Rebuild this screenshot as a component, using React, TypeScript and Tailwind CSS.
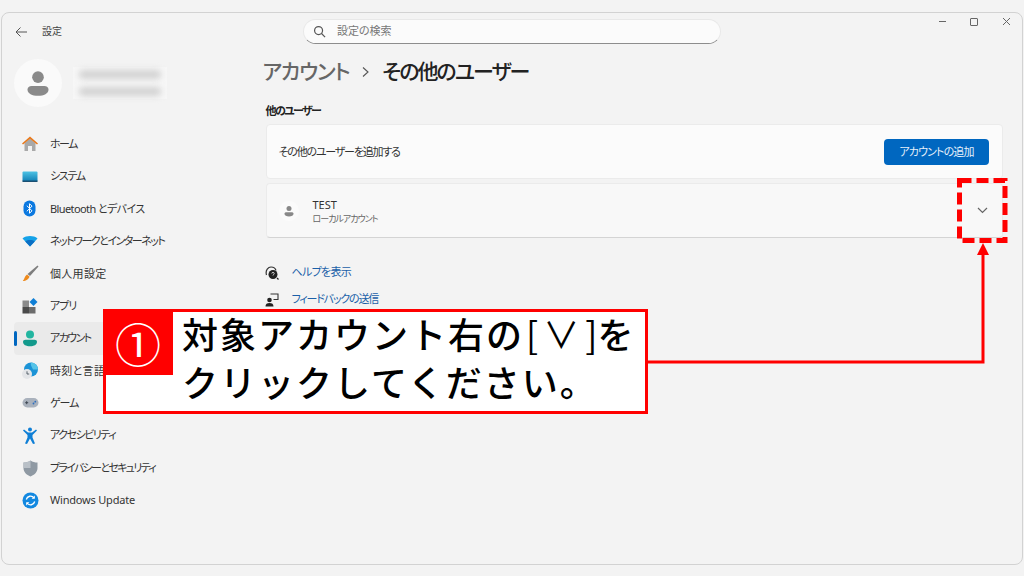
import type { ReactNode } from "react";

const ui = "font-['Noto_Sans','Noto_Sans_CJK_JP',sans-serif] [font-feature-settings:'palt']";

function UserGlyph({ size, color }: { size: number; color: string }) {
  return (
    <svg width={size} height={size} viewBox="0 0 24 24" fill={color}>
      <circle cx="12" cy="7" r="5" />
      <path d="M3 17.5C3 15.5 4.5 14.5 6.5 14.5H17.5C19.5 14.5 21 15.5 21 17.5C21 21 17 23 12 23C7 23 3 21 3 17.5Z" />
    </svg>
  );
}

const icons: Record<string, ReactNode> = {
  home: (
    <svg width="18" height="18" viewBox="0 0 18 18">
      <path d="M3.5 8L9 3.5L14.500 8V16H11V11H7V16H3.500Z" fill="#a9a9a9" />
      <path d="M1 8.500L9 1.500L17 8.500L16 9.500L9 3.800L2 9.500Z" fill="#e8781a" />
    </svg>
  ),
  system: (
    <svg width="16" height="12" viewBox="0 0 16 12">
      <defs>
        <linearGradient id="sys" x1="0" y1="0" x2="0" y2="1">
          <stop offset="0" stopColor="#4cc2e4" />
          <stop offset="1" stopColor="#0f7fb5" />
        </linearGradient>
      </defs>
      <rect x="0.500" y="0.500" width="15" height="10" rx="1" fill="url(#sys)" />
      <rect x="0.500" y="9.500" width="15" height="1.500" fill="#1b4f72" />
    </svg>
  ),
  bluetooth: (
    <svg width="14" height="18" viewBox="0 0 14 18">
      <rect x="0.500" y="0.500" width="12" height="16" rx="6" fill="#0a78e0" />
      <path d="M3.800 5.700L9 10.800L6.500 13.300V3.700L9 6.200L3.800 11.300" fill="none" stroke="#fff" strokeWidth="1" />
    </svg>
  ),
  network: (
    <svg width="16" height="12" viewBox="0 0 16 12">
      <path d="M0.500 3.500C4.500 0.300 11.500 0.300 15.500 3.500L8 11.500Z" fill="#15a2e8" />
      <path d="M3.200 6.400C6 4.500 10 4.500 12.800 6.400L8 11.500Z" fill="#0a6fc4" />
    </svg>
  ),
  personal: (
    <svg width="17" height="17" viewBox="0 0 17 17">
      <path d="M15.500 0.500L16.500 1.500L8 11L5.500 9Z" fill="#7d7d7d" />
      <path d="M5 9.500L7.500 11.500C7 14 4 16 0.800 16C2.500 14.500 2.500 11 5 9.500Z" fill="#ee8a1c" />
    </svg>
  ),
  apps: (
    <svg width="16" height="16" viewBox="0 0 16 16">
      <rect x="0.500" y="2.500" width="6.500" height="6.500" fill="#8a8a8a" />
      <rect x="0.500" y="9" width="6.500" height="6.500" fill="#4a4a4a" />
      <rect x="7" y="9" width="6.500" height="6.500" fill="#6c6c6c" />
      <path d="M11.500 0L15.500 4L11.500 8L7.500 4Z" fill="#0f7fd6" />
    </svg>
  ),
  account: (
    <svg width="16" height="17" viewBox="0 0 16 17">
      <circle cx="8" cy="4.500" r="4" fill="#22b5a0" />
      <path d="M1 11.800C1 10.500 2 9.800 3.500 9.800H12.500C14 9.800 15 10.500 15 11.800C15 14.800 12 16.300 8 16.300C4 16.300 1 14.800 1 11.800Z" fill="#139a8c" />
    </svg>
  ),
  time: (
    <svg width="18" height="18" viewBox="0 0 18 18">
      <circle cx="10" cy="7.500" r="7" fill="#1b93d6" />
      <path d="M10 0.500A7 7 0 0 1 17 7.500H12C11 5 9 3 10 0.500Z" fill="#56c4e8" />
      <circle cx="6" cy="12" r="5" fill="#e3e5e8" />
      <path d="M6 9.300V12H8.200" fill="none" stroke="#4a5560" strokeWidth="0.900" />
    </svg>
  ),
  game: (
    <svg width="17" height="12" viewBox="0 0 17 12">
      <rect x="0.500" y="1" width="16" height="9.500" rx="4.700" fill="#a9b1bc" />
      <path d="M3.200 5.700H6.200M4.700 4.200V7.200" stroke="#3d4650" strokeWidth="1" />
      <circle cx="11.500" cy="6.500" r="0.900" fill="#2c6fc0" />
      <circle cx="13.300" cy="4.700" r="0.900" fill="#2c6fc0" />
    </svg>
  ),
  access: (
    <svg width="16" height="18" viewBox="0 0 16 18">
      <circle cx="8" cy="2.500" r="2" fill="#0f7fd6" />
      <path d="M1 3.500L2 2.500L6 5.500H10L14 2.500L15 3.500L10.500 8V10.500L13 16.500L11 17L8 11.500L5 17L3 16.500L5.500 10.500V8Z" fill="#0f7fd6" />
    </svg>
  ),
  privacy: (
    <svg width="15" height="17" viewBox="0 0 15 17">
      <path d="M7.500 0.500C9.500 2 12 2.500 14.500 2.500V8C14.500 12 11.500 15 7.500 16.500C3.500 15 0.500 12 0.500 8V2.500C3 2.500 5.500 2 7.500 0.500Z" fill="#8f99a3" />
      <path d="M7.500 0.500C5.500 2 3 2.500 0.500 2.500V8H7.500Z" fill="#b9c0c7" />
    </svg>
  ),
  update: (
    <svg width="17" height="17" viewBox="0 0 17 17">
      <circle cx="8.500" cy="8.500" r="8" fill="#1288e0" />
      <path d="M4.300 7.500A4.300 4.300 0 0 1 12 6" fill="none" stroke="#fff" strokeWidth="1.300" />
      <path d="M12.700 9.500A4.300 4.300 0 0 1 5 11" fill="none" stroke="#fff" strokeWidth="1.300" />
      <path d="M12.800 3.600V6.800H9.600Z" fill="#fff" />
      <path d="M4.200 13.400V10.200H7.400Z" fill="#fff" />
    </svg>
  ),
};

const navItems = [
  { key: "home", label: "ホーム", track: "tracking-[-1.5px]" },
  { key: "system", label: "システム", track: "tracking-[-1.3px]" },
  { key: "bluetooth", label: "Bluetooth とデバイス", track: "tracking-[-0.6px]" },
  { key: "network", label: "ネットワークとインターネット", track: "tracking-[-1.5px]" },
  { key: "personal", label: "個人用設定", track: "tracking-[0.3px]" },
  { key: "apps", label: "アプリ", track: "tracking-[-1px]" },
  { key: "account", label: "アカウント", track: "tracking-[-1.6px]", active: true },
  { key: "time", label: "時刻と言語", track: "tracking-[0.3px]" },
  { key: "game", label: "ゲーム", track: "tracking-[-1px]" },
  { key: "access", label: "アクセシビリティ", track: "tracking-[-1.5px]" },
  { key: "privacy", label: "プライバシーとセキュリティ", track: "tracking-[-1.7px]" },
  { key: "update", label: "Windows Update", track: "tracking-[-0.2px]" },
];

function Header() {
  return (
    <div className="grid h-[37px] grid-cols-[1fr_418px_1fr] items-center">
      <div className="flex items-center pl-[12px]">
        <svg width="14" height="14" viewBox="0 0 14 14" fill="none" stroke="#555" strokeWidth="1">
          <path d="M13 7H2M6.500 2.500L2 7L6.500 11.500" />
        </svg>
        <span className="ml-[14px] text-[10px] text-[#444]">設定</span>
      </div>
      <div className="flex h-[25px] items-center rounded-full border border-[#e8e8e8] border-b-[#8d8d8d] bg-[#fbfbfb] pl-[9px]">
        <svg width="13" height="13" viewBox="0 0 14 14" fill="none" stroke="#555" strokeWidth="1.300">
          <circle cx="6" cy="6" r="4.300" />
          <path d="M9.200 9.200L13 13" />
        </svg>
        <span className="ml-[11px] text-[11px] text-[#777]">設定の検索</span>
      </div>
      <div className="flex items-center justify-end gap-[24px] self-start pr-[11px] pt-[4px]">
        <div className="h-[1.500px] w-[7px] bg-[#666]" />
        <div className="h-[8px] w-[8px] rounded-[1px] border-[1.500px] border-[#666]" />
        <svg width="9" height="9" viewBox="0 0 9 9" stroke="#666" strokeWidth="1">
          <path d="M1 1L8 8M8 1L1 8" />
        </svg>
      </div>
    </div>
  );
}

function Sidebar() {
  return (
    <aside className="w-[263.500px] shrink-0 pl-[12px] pr-[14px]">
      <div className="mt-[9px] flex items-center">
        <div className="flex h-[48px] w-[48px] items-center justify-center rounded-full bg-[#fafafa]">
          <UserGlyph size={28} color="#8a8a8a" />
        </div>
        <div className="ml-[11px] flex flex-col gap-[2px] bg-[#f7f7f7]">
          <div className="flex h-[15px] w-[94px] items-center justify-center">
            <div className="h-[9px] w-[82px] rounded-sm bg-[#d2d2d2] blur-[3px]" />
          </div>
          <div className="flex h-[15px] w-[94px] items-center justify-center">
            <div className="h-[9px] w-[82px] rounded-sm bg-[#d2d2d2] blur-[3px]" />
          </div>
        </div>
      </div>
      <nav className="mt-[21px]">
        {navItems.map((item) => (
          <div
            key={item.key}
            className={`relative flex h-[32.400px] items-center rounded-[4px] ${item.active ? "bg-[#eaeaea]" : ""}`}
          >
            {item.active && <div className="absolute left-0 h-[15px] w-[2.500px] rounded-full bg-[#0067c0]" />}
            <div className="flex w-[36px] shrink-0 justify-center pr-[4px]">{icons[item.key]}</div>
            <span className={`text-[11px] text-[#333] ${item.track}`}>{item.label}</span>
          </div>
        ))}
      </nav>
    </aside>
  );
}

function Main() {
  return (
    <main className="flex-1 pr-[19px]">
      <div className="mt-[6px] flex h-[32px] items-center text-[21px]">
        <span className="ml-[-3px] font-medium tracking-[-1.2px] text-[#666]">アカウント</span>
        <svg className="mx-[12px]" width="9" height="12" viewBox="0 0 9 12" fill="none" stroke="#555" strokeWidth="1.100">
          <path d="M2 1.500L7 6L2 10.500" />
        </svg>
        <span className="font-medium tracking-[-2px] text-[#222]">その他のユーザー</span>
      </div>
      <div className="mt-[15px] text-[11px] font-bold leading-[16px] tracking-[-1.6px] text-[#222]">他のユーザー</div>
      <div className="mt-[5px] flex h-[55px] items-center justify-between rounded-[4px] border border-[#ebebeb] bg-[#fbfbfb] pl-[12px] pr-[13px]">
        <span className="pt-[2px] text-[11px] tracking-[-1.2px] text-[#333]">その他のユーザーを追加する</span>
        <button className="h-[26px] w-[105px] rounded-[4px] bg-[#0067c0] pt-[2px] text-[11px] tracking-[-0.9px] text-[#e6f0fa]">アカウントの追加</button>
      </div>
      <div className="mt-[4px] flex h-[55px] items-center justify-between rounded-[4px] border border-[#ebebeb] border-b-[#d4d4d4] bg-[#f8f8f8] pl-[12px] pr-[14px]">
        <div className="flex items-center">
          <div className="flex h-[20px] w-[20px] items-center justify-center rounded-full bg-[#fbfbfb]">
            <UserGlyph size={12} color="#888" />
          </div>
          <div className="ml-[14px] flex flex-col pt-[1px]">
            <span className="text-[11px] leading-[14px] text-[#333]">TEST</span>
            <span className="text-[9px] leading-[13px] tracking-[-1px] text-[#666]">ローカルアカウント</span>
          </div>
        </div>
        <svg width="11" height="7" viewBox="0 0 11 7" fill="none" stroke="#666" strokeWidth="1.200">
          <path d="M1 1L5.500 5.500L10 1" />
        </svg>
      </div>
      <div className="ml-[-1px] mt-[21px] flex flex-col">
        <div className="flex h-[27px] items-center">
          <svg width="14" height="14" viewBox="0 0 14 14" className="shrink-0">
            <path d="M1.500 9C0 4 3.500 1 6 1C8.500 1 10.500 2.500 11 4.500" fill="none" stroke="#333" strokeWidth="1.200" />
            <circle cx="8" cy="8.500" r="4.500" fill="#222" />
            <path d="M6.800 7.500C6.800 6 9.200 6 9.200 7.500C9.200 8.500 8 8.500 8 9.500" fill="none" stroke="#fff" strokeWidth="0.800" />
            <path d="M12 12L13.500 13.500" stroke="#222" strokeWidth="1.200" />
          </svg>
          <span className="ml-[13px] text-[11px] tracking-[-0.7px] text-[#1a5fa8]">ヘルプを表示</span>
        </div>
        <div className="flex h-[27px] items-center">
          <svg width="14" height="14" viewBox="0 0 14 14" className="shrink-0">
            <circle cx="4.500" cy="7" r="2.300" fill="#222" />
            <path d="M0.500 13.500C0.500 11 2 10 4.500 10C7 10 8.500 11 8.500 13.500Z" fill="#222" />
            <path d="M5.500 1H13V6.500H8.500" fill="none" stroke="#333" strokeWidth="1.100" />
          </svg>
          <span className="ml-[13px] text-[11px] tracking-[-1.2px] text-[#1a5fa8]">フィードバックの送信</span>
        </div>
      </div>
    </main>
  );
}

function Callout() {
  return (
    <>
      <div className="absolute left-[103px] top-[309px] h-[105px] w-[545px] border-[3px] border-[#ff0000] bg-white font-['Noto_Sans_CJK_JP',sans-serif] text-[36px] font-medium text-black [font-feature-settings:normal]">
        <div className="absolute left-[-3px] top-[-3px] flex h-[66px] w-[70px] items-center justify-center bg-[#ff0000] text-[46px] font-normal leading-none text-white">
          ①
        </div>
        <div className="absolute left-[76px] top-[-3px] whitespace-nowrap tracking-[2px] leading-[48px]">
          対象アカウント右の
          <span className="ml-[2px] font-normal tracking-[5px]">[</span>
          <span className="font-normal tracking-[6px]">∨</span>
          <span className="font-normal tracking-[0px]">]</span>を
          <br />
          クリックしてください。
        </div>
      </div>
      <svg className="absolute left-0 top-0" width="1024" height="576" fill="none">
        <rect x="959.500" y="180.500" width="45.500" height="60" stroke="#ff0000" strokeWidth="5" strokeDasharray="12 5" />
        <path d="M647 362H983V252" stroke="#ff0000" strokeWidth="3" />
        <path d="M983 243L977 255H989Z" fill="#ff0000" />
      </svg>
    </>
  );
}

export default function App() {
  return (
    <div className={`relative h-[576px] w-[1024px] overflow-hidden bg-[#f3f3f3] px-[1px] pb-[11px] pt-[12px] ${ui}`}>
      <div className="h-full rounded-[8px] border-[1.500px] border-[#d2d2d2] bg-[#f3f3f3]">
        <Header />
        <div className="flex">
          <Sidebar />
          <Main />
        </div>
      </div>
      <Callout />
    </div>
  );
}
